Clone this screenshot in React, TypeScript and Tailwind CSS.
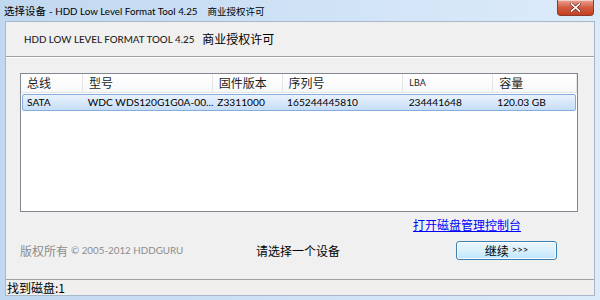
import { FC } from "react";

type Disk = {
  bus: string;
  model: string;
  firmware: string;
  serial: string;
  lba: string;
  capacity: string;
};

const disks: Disk[] = [
  {
    bus: "SATA",
    model: "WDC WDS120G1G0A-00...",
    firmware: "Z3311000",
    serial: "165244445810",
    lba: "234441648",
    capacity: "120.03 GB",
  },
];

// column widths measured off the list header
const columns = [
  { label: "总线", width: "w-[62px]" },
  { label: "型号", width: "w-[130px]" },
  { label: "固件版本", width: "w-[70px]" },
  { label: "序列号", width: "w-[121px]" },
  { label: "LBA", width: "w-[90px]" },
  { label: "容量", width: "w-[84px]" },
];

const ui = "font-['Lato','Noto_Sans_CJK_SC',sans-serif]";
const cjk = "font-['Noto_Sans_CJK_SC','Noto_Sans',sans-serif]";

const CloseButton: FC = () => (
  <div className="mr-[6px] flex h-[16px] w-[37px] items-center justify-center rounded-b-[4px] border border-t-0 border-[#8a3a2e] bg-gradient-to-b from-[#e9a493] via-[#d45a40] to-[#c3401f] shadow-[inset_0_1px_0_rgba(255,255,255,0.5)]">
    <svg width="11" height="9" viewBox="0 0 12 10">
      <path d="M1.5 1 L10.5 9 M10.5 1 L1.5 9" stroke="#5a2015" strokeWidth="3.2" strokeLinecap="square" />
      <path d="M1.5 1 L10.5 9 M10.5 1 L1.5 9" stroke="#ffffff" strokeWidth="1.8" strokeLinecap="square" />
    </svg>
  </div>
);

const DiskList: FC = () => (
  <div className="h-[139px] w-[558px] border border-[#828790] bg-white">
    <div className="flex h-[19px] items-center border-b border-[#e5e5e5] bg-gradient-to-b from-white to-[#f7f8fa]">
      {columns.map((c) => (
        <div
          key={c.label}
          className={`${c.width} flex h-full items-center border-r border-[#e5e5e5] pl-[6px] text-[#1e1e1e] ${
            c.label === "LBA" ? `${ui} text-[9px]` : `${cjk} text-[12px]`
          }`}
        >
          {c.label}
        </div>
      ))}
    </div>
    {disks.map((d) => (
      <div
        key={d.serial}
        className={`mx-[1px] mt-[1px] flex h-[17px] items-center whitespace-nowrap rounded-[2px] border border-[#84acdd] bg-gradient-to-b from-[#eaf3fd] to-[#c6ddf7] text-[10.2px] text-black ${ui}`}
      >
        <div className="w-[61px] pl-[4px]">{d.bus}</div>
        <div className="w-[130px] pl-[4px]">{d.model}</div>
        <div className="w-[70px] pl-[4px]">{d.firmware}</div>
        <div className="w-[121px] pl-[4px]">{d.serial}</div>
        <div className="w-[90px] pl-[5px]">{d.lba}</div>
        <div className="w-[82px] pl-[4px]">{d.capacity}</div>
      </div>
    ))}
  </div>
);

const App: FC = () => {
  return (
    <div className="flex h-[300px] w-[600px] flex-col overflow-hidden bg-gradient-to-r from-[#c0d8f0] via-[#cfe2f6] to-[#dcebfa]">
      <div className="flex h-[21px] shrink-0 items-start justify-between">
        <div className={`flex items-center whitespace-nowrap pl-[4px] pt-[3px] leading-[16px] text-black ${ui}`}>
          <span className={`text-[10.5px] ${cjk}`}>选择设备</span>
          <span className="ml-[3px] text-[9.8px]">- HDD Low Level Format Tool 4.25</span>
          <span className={`ml-[10px] text-[9.5px] ${cjk}`}>商业授权许可</span>
        </div>
        <CloseButton />
      </div>

      <div className="mx-[5px] flex flex-1 flex-col border border-[#a7b8ca] bg-[#f0f0f0]">
        <div className="flex h-[35px] shrink-0 items-center whitespace-nowrap border-b border-b-[#a0a0a0] pl-[18px] shadow-[0_1px_0_#ffffff]">
          <span className={`text-[9.8px] font-medium text-[#1e1e1e] ${ui}`}>HDD LOW LEVEL FORMAT TOOL 4.25</span>
          <span className={`ml-[8px] text-[12px] text-black ${cjk}`}>商业授权许可</span>
        </div>

        <div className="flex flex-1 flex-col px-[14px] pt-[16px]">
          <DiskList />
          <div className="mt-[5px] flex justify-end pr-[59px]">
            <a href="#" className={`text-[12px] leading-[16px] text-[#0000ff] underline ${cjk}`}>
              打开磁盘管理控制台
            </a>
          </div>
          <div className="mt-[8px] flex items-center whitespace-nowrap">
            <div className={`flex w-[236px] items-center text-[#8c8c8c] ${ui}`}>
              <span className={`text-[12px] ${cjk}`}>版权所有</span>
              <span className="ml-[3px] text-[9.8px]">© 2005-2012 HDDGURU</span>
            </div>
            <div className={`w-[200px] text-[12px] text-black ${cjk}`}>请选择一个设备</div>
            <button className="flex h-[19px] w-[101px] items-center justify-center rounded-[3px] border border-[#3c7fb1] bg-gradient-to-b from-[#eaf6fd] via-[#d9f0fc] to-[#bee6fd] shadow-[inset_0_0_0_1px_#ffffff]">
              <span className={`text-[12px] text-black ${cjk}`}>继续</span>
              <span className={`ml-[3px] text-[9.5px] text-black ${ui}`}>&gt;&gt;&gt;</span>
            </button>
          </div>
        </div>

        <div className="flex h-[16px] shrink-0 items-center border-t border-t-[#a0a0a0] bg-[#f0efed] pl-[1px]">
          <span className={`text-[12px] leading-[14px] text-black ${cjk}`}>找到磁盘:1</span>
        </div>
      </div>
      <div className="h-[4px] shrink-0" />
    </div>
  );
};

export default App;
